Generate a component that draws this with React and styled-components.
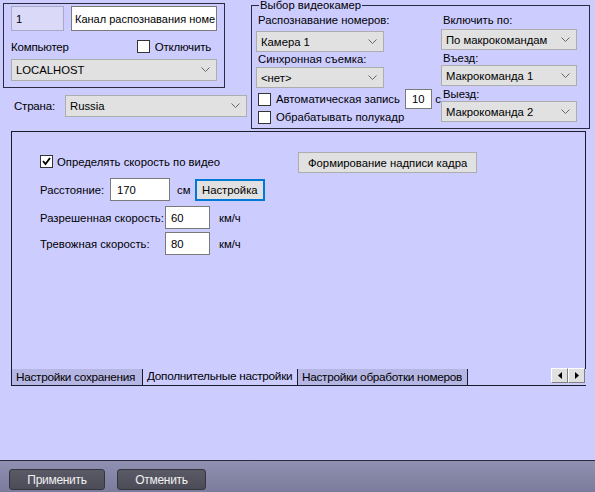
import React from 'react';
import styled, { createGlobalStyle } from 'styled-components';

const Global = createGlobalStyle`
  html, body { margin: 0; padding: 0; }
  body { font-family: "Liberation Sans", Arial, sans-serif; font-size: 11.3px; color: #000; }
`;

const Page = styled.div`
  width: 595px;
  height: 492px;
  background: #ccccff;
  display: flex;
  flex-direction: column;
  overflow: hidden;
`;

const Top = styled.div`
  display: flex;
  align-items: flex-start;
  padding-left: 3px;
  gap: 3px;
`;

const LeftCol = styled.div`
  width: 245px;
  padding-top: 3px;
  display: flex;
  flex-direction: column;
`;

const Group = styled.div`
  box-sizing: border-box;
  width: 222px;
  height: 85px;
  border: 1px solid #2a2a40;
  padding: 2px 7px 0 7px;
  display: flex;
  flex-direction: column;
`;

const Row = styled.div`
  display: flex;
  align-items: center;
  gap: ${p => p.gap || 0}px;
`;

const TextBox = styled.div`
  box-sizing: border-box;
  width: ${p => p.w}px;
  height: ${p => p.h || 22}px;
  background: ${p => (p.disabled ? '#dadaf8' : '#fff')};
  border: 1px solid ${p => (p.disabled ? '#a8a8c8' : '#7a7a7a')};
  padding: 0 ${p => p.pad ?? 4}px;
  display: flex;
  align-items: center;
  font-size: ${p => p.fs || 11.3}px;
  white-space: nowrap;
`;

const Label = styled.span`
  font-size: ${p => p.fs || 11.3}px;
  white-space: nowrap;
  letter-spacing: ${p => p.ls || 0}px;
`;

const Check = styled.span`
  box-sizing: border-box;
  width: 13px;
  height: 13px;
  background: #fff;
  border: 1px solid #333;
  display: inline-flex;
  align-items: center;
  justify-content: center;
  flex: none;
`;

const SelectBox = styled.div`
  box-sizing: border-box;
  width: ${p => p.w}px;
  height: ${p => p.h || 22}px;
  margin-top: ${p => p.mt || 0}px;
  background: #e1e1e1;
  border: 1px solid #adadad;
  display: flex;
  align-items: center;
  justify-content: space-between;
  padding: 0 6px 0 4px;
  white-space: nowrap;
`;

const Chevron = () => (
  <svg width="9" height="6" viewBox="0 0 9 6">
    <polyline points="0.5,0.5 4.5,4.5 8.5,0.5" fill="none" stroke="#666" strokeWidth="1" />
  </svg>
);

const Select = ({ w, h, mt, children }) => (
  <SelectBox w={w} h={h} mt={mt}>
    <span>{children}</span>
    <Chevron />
  </SelectBox>
);

const CheckBox = ({ checked }) => (
  <Check>
    {checked && (
      <svg width="9" height="9" viewBox="0 0 9 9">
        <polyline points="1,4 3.5,7 8,1" fill="none" stroke="#000" strokeWidth="1.8" />
      </svg>
    )}
  </Check>
);

const CountryRow = styled.div`
  display: flex;
  align-items: center;
  margin-top: 7px;
  padding-left: 11px;
`;

const Fieldset = styled.fieldset`
  margin: -1px 0 0 0;
  padding: 0 0 0 4px;
  width: 339px;
  height: 130px;
  box-sizing: border-box;
  border: 1px solid #2a2a40;
  display: flex;
`;

const Legend = styled.legend`
  padding: 0 1px;
  margin-left: 3px;
  font-size: 11.3px;
  line-height: 12px;
  height: 12px;
`;

const Col = styled.div`
  width: ${p => p.w || 'auto'};
  display: flex;
  flex-direction: column;
`;

const FieldLabel = styled.div`
  height: 14px;
  margin-top: ${p => p.mt || 0}px;
  line-height: 14px;
  padding-left: 2px;
  white-space: nowrap;
`;

const OptionRow = styled.div`
  display: flex;
  align-items: center;
  gap: 5px;
  padding-left: 2px;
  height: ${p => p.h}px;
  margin-top: ${p => p.mt || 0}px;
`;

const Panel = styled.div`
  margin: 2px 0 0 11px;
  width: 575px;
  height: 238px;
  box-sizing: border-box;
  border: 1px solid #1a1a2a;
  border-bottom: none;
  padding: 23px 0 0 28px;
  display: flex;
`;

const SpeedCol = styled.div`
  width: 258px;
  display: flex;
  flex-direction: column;
`;

const Button = styled.div`
  box-sizing: border-box;
  height: ${p => p.h || 21}px;
  padding: 0 ${p => p.px || 9}px;
  background: #e1e1e1;
  border: ${p => (p.focus ? '2px solid #0078d7' : '1px solid #adadad')};
  display: inline-flex;
  align-items: center;
  white-space: nowrap;
`;

const Tabs = styled.div`
  margin-left: 11px;
  width: 575px;
  height: 16px;
  display: flex;
  align-items: flex-start;
  border-bottom: 1px solid #1a1a2a;
  position: relative;
`;

const Tab = styled.div`
  box-sizing: border-box;
  width: ${p => p.w}px;
  height: 16px;
  padding: 0 4px;
  background: ${p => (p.active ? '#ccccff' : '#b6b6e4')};
  border-left: ${p => (p.active ? 'none' : '1px solid #1a1a2a')};
  border-right: ${p => (p.active ? 'none' : '1px solid #1a1a2a')};
  display: flex;
  align-items: center;
  padding-bottom: ${p => (p.active ? 3 : 0)}px;
  font-size: 11.8px;
  letter-spacing: -0.3px;
  white-space: nowrap;
`;

const Scroller = styled.div`
  position: absolute;
  right: 1px;
  top: -1px;
  display: flex;
`;

const ArrowBtn = styled.div`
  width: 17px;
  height: 15px;
  box-sizing: border-box;
  background: #e0e0e0;
  border: 1px solid #fff;
  border-right-color: #808080;
  border-bottom-color: #808080;
  display: flex;
  align-items: center;
  justify-content: center;
`;

const Spacer = styled.div`
  flex: 1;
`;

const Footer = styled.div`
  height: 32px;
  border-top: 1px solid #2a2a38;
  background: linear-gradient(#9090b2, #7b7b9c);
  display: flex;
  align-items: flex-start;
  padding: 8px 0 0 9px;
  box-sizing: border-box;
  gap: 12px;
`;

const DarkButton = styled.div`
  box-sizing: border-box;
  width: ${p => p.w}px;
  height: 21px;
  border-radius: 3px;
  border: 1px solid #35353f;
  background: linear-gradient(#5a5a66, #4c4c58);
  color: #f0f0f0;
  display: flex;
  align-items: center;
  justify-content: center;
  font-size: 12px;
  letter-spacing: -0.3px;
`;

export default function App() {
  return (
    <Page>
      <Global />
      <Top>
        <LeftCol>
          <Group>
            <Row gap={7}>
              <TextBox w={53} h={25} disabled>1</TextBox>
              <TextBox w={146} h={25} pad={3} fs={11}>Канал распознавания номе</TextBox>
            </Row>
            <Row style={{ marginTop: 9, justifyContent: 'space-between', paddingRight: 6 }}>
              <Label fs={11.5} ls={-0.2}>Компьютер</Label>
              <Row gap={5}>
                <CheckBox />
                <Label fs={11.5} ls={-0.2}>Отключить</Label>
              </Row>
            </Row>
            <Select w={206} mt={6}>LOCALHOST</Select>
          </Group>
          <CountryRow>
            <Label fs={11.5} ls={-0.2} style={{ width: 51 }}>Страна:</Label>
            <Select w={182}>Russia</Select>
          </CountryRow>
        </LeftCol>
        <Fieldset>
          <Legend>Выбор видеокамер</Legend>
          <Col w="185px">
            <FieldLabel mt={2}>Распознавание номеров:</FieldLabel>
            <Select w={128} h={21} mt={4}>Камера 1</Select>
            <FieldLabel>Синхронная съемка:</FieldLabel>
            <Select w={128} h={21} mt={1}>&lt;нет&gt;</Select>
            <OptionRow h={20} mt={1}>
              <CheckBox />
              <Label>Автоматическая запись</Label>
              <TextBox w={30} h={20} pad={6}>10</TextBox>
              <Label style={{ marginLeft: -2 }}>с</Label>
            </OptionRow>
            <OptionRow h={14} mt={1}>
              <CheckBox />
              <Label>Обрабатывать полукадр</Label>
            </OptionRow>
          </Col>
          <Col>
            <FieldLabel mt={2}>Включить по:</FieldLabel>
            <Select w={136} h={21} mt={2}>По макрокомандам</Select>
            <FieldLabel mt={1}>Въезд:</FieldLabel>
            <Select w={136} h={21}>Макрокоманда 1</Select>
            <FieldLabel mt={1}>Выезд:</FieldLabel>
            <Select w={136} h={21}>Макрокоманда 2</Select>
          </Col>
        </Fieldset>
      </Top>

      <Panel>
        <SpeedCol>
          <Row gap={4}>
            <CheckBox checked />
            <Label>Определять скорость по видео</Label>
          </Row>
          <Row style={{ marginTop: 10 }}>
            <Label style={{ width: 70 }}>Расстояние:</Label>
            <TextBox w={60} h={23} pad={6}>170</TextBox>
            <Label style={{ marginLeft: 7, width: 18 }}>см</Label>
            <Button focus h={22} px={5}>Настройка</Button>
          </Row>
          <Row style={{ marginTop: 5 }}>
            <Label style={{ width: 125 }}>Разрешенная скорость:</Label>
            <TextBox w={45} h={23} pad={5}>60</TextBox>
            <Label style={{ marginLeft: 9 }}>км/ч</Label>
          </Row>
          <Row style={{ marginTop: 3 }}>
            <Label style={{ width: 125 }}>Тревожная скорость:</Label>
            <TextBox w={45} h={23} pad={5}>80</TextBox>
            <Label style={{ marginLeft: 9 }}>км/ч</Label>
          </Row>
        </SpeedCol>
        <div style={{ marginTop: -3 }}>
          <Button h={21} px={9}>Формирование надписи кадра</Button>
        </div>
      </Panel>
      <Tabs>
        <Tab w={132}>Настройки сохранения</Tab>
        <Tab active w={154}>Дополнительные настройки</Tab>
        <Tab w={171}>Настройки обработки номеров</Tab>
        <Scroller>
          <ArrowBtn>
            <svg width="4" height="7" viewBox="0 0 4 7"><polygon points="4,0 0,3.5 4,7" fill="#000" /></svg>
          </ArrowBtn>
          <ArrowBtn>
            <svg width="4" height="7" viewBox="0 0 4 7"><polygon points="0,0 4,3.5 0,7" fill="#000" /></svg>
          </ArrowBtn>
        </Scroller>
      </Tabs>
      <Spacer />
      <Footer>
        <DarkButton w={96}>Применить</DarkButton>
        <DarkButton w={89}>Отменить</DarkButton>
      </Footer>
    </Page>
  );
}
